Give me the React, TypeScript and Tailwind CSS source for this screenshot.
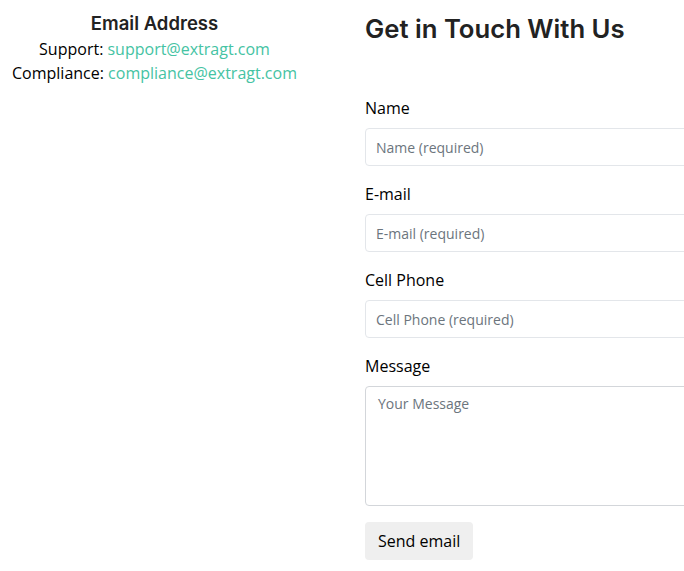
const heading = { fontFamily: '"Inter", "Open Sans", sans-serif' }

function Field({ label, placeholder }: { label: string; placeholder: string }) {
  return (
    <div className="mb-4">
      <label className="mb-2 block text-base leading-6 text-black">{label}</label>
      <input
        type="text"
        placeholder={placeholder}
        className="block h-[38px] w-[520px] rounded border border-[#e3e6ea] bg-white px-[10px] text-sm text-[#212529] outline-none placeholder:text-[#6c757d]"
      />
    </div>
  )
}

export default function App() {
  return (
    <div className="flex h-[571px] w-[684px] overflow-hidden bg-white font-['Open_Sans',sans-serif] text-black">
      <div className="w-[309px] shrink-0 pt-[9px] text-center leading-6">
        <h3 className="text-[18.5px] leading-7 font-semibold text-[#222]" style={heading}>
          Email Address
        </h3>
        <p>
          Support: <a href="#" className="text-[#45c3a3]">support@extragt.com</a>
        </p>
        <p>
          Compliance: <a href="#" className="text-[#45c3a3]">compliance@extragt.com</a>
        </p>
      </div>

      <div className="ml-[56px] shrink-0 pt-[12px]">
        <h2 className="mb-[50px] text-[25.7px] leading-[34px] font-semibold text-[#222]" style={heading}>
          Get in Touch With Us
        </h2>
        <form>
          <Field label="Name" placeholder="Name (required)" />
          <Field label="E-mail" placeholder="E-mail (required)" />
          <Field label="Cell Phone" placeholder="Cell Phone (required)" />
          <div className="mb-4">
            <label className="mb-2 block text-base leading-6 text-black">Message</label>
            <textarea
              placeholder="Your Message"
              className="block h-[120px] w-[520px] resize-none rounded border border-[#d3d6da] bg-white px-3 py-[7px] text-sm text-[#212529] outline-none placeholder:text-[#6c757d]"
            />
          </div>
          <button type="button" className="h-[38px] rounded bg-[#efefef] px-[13px] text-base text-black">
            Send email
          </button>
        </form>
      </div>
    </div>
  )
}
